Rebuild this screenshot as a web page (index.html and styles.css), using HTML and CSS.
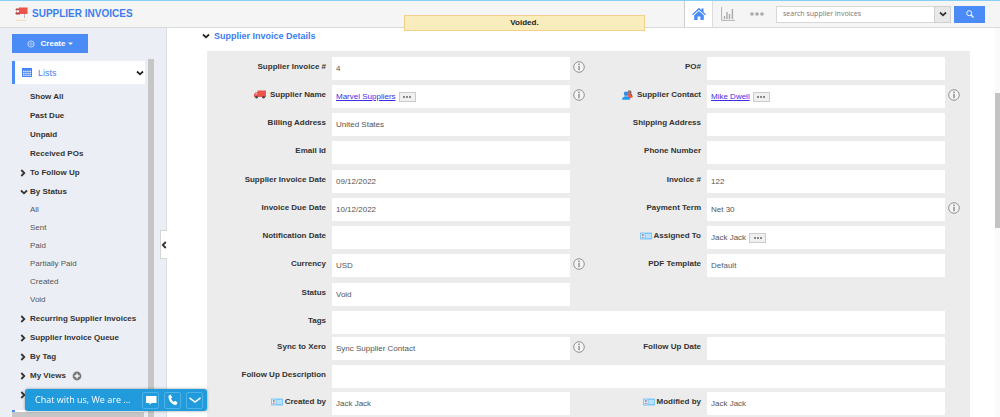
FILE: index.html
```html
<!DOCTYPE html>
<html lang="en">
<head>
<meta charset="utf-8">
<title>Supplier Invoices</title>
<link rel="stylesheet" href="styles.css">
</head>
<body>
<svg class="defs" aria-hidden="true">
  <symbol id="down" viewBox="0 0 8 6"><path d="M1 1.500 4 4.300 7 1.500" fill="none" stroke="currentColor" stroke-width="1.800"/></symbol>
  <symbol id="right" viewBox="0 0 6 8"><path d="M1.300 1 4.300 4 1.300 7" fill="none" stroke="currentColor" stroke-width="1.800"/></symbol>
  <symbol id="info" viewBox="0 0 12 12"><circle cx="6" cy="6" r="5.300" fill="#f4f4f4" stroke="#888" stroke-width=".9"/><path d="M6 2.600v1.300M6 4.800v4.500" stroke="#777" stroke-width="1.200"/></symbol>
  <symbol id="card" viewBox="0 0 12 8"><path d="M0 .5h12v7H0z" fill="#7fc8f8"/><path d="M1 1.600h3.600v4.800H1z" fill="#e4f1fa"/><path d="M5.600 2h5.400v4H5.600z" fill="#b9e2fd"/><circle cx="2.800" cy="3" r=".9" fill="#8f7e80"/><path d="M1.400 6q1.400-3 2.800 0z" fill="#d8898a"/></symbol>
</svg>

<header class="topbar">
  <svg class="logo" viewBox="0 0 14 14"><path d="M1 1.500h4v6H1l-.8-1.500 1.500-1V3.500L.5 3z" fill="#b8453f"/><path d="M1.800 3.200h2.600v2.200H1.800z" fill="#f5f5f5"/><path d="M4 .5h8.500v6.500H5V5.500L4 4.500z" fill="#e9544c"/><path d="M9.500 7v4" stroke="#bbb"/><path d="M1 13.400h10" stroke="#f2d9a0" stroke-width=".8"/></svg>
  <h1 class="title">SUPPLIER INVOICES</h1>
  <nav class="tools">
    <a class="tool active" href="#" aria-label="Home"><svg viewBox="0 0 14 14" width="14" height="14"><path d="M0 7.500 7 .8l2.500 2.400V1.500h2v3.600L14 7.500l-.8.8L7 2.700.8 8.300z" fill="#4285f4"/><path d="M2.200 8.200 7 4l4.800 4.200V13H8.400V9.400H5.600V13H2.200z" fill="#4a8cf5"/></svg></a>
    <a class="tool" href="#" aria-label="Reports"><svg viewBox="0 0 14 14" width="14" height="14"><path d="M.6 0v13.400H14" fill="none" stroke="#aaa" stroke-width=".9"/><path d="M3.500 12V9M6 12V5M8.500 12V7M11.400 12V2" stroke="#aaa" stroke-width="1.400"/></svg></a>
    <a class="tool" href="#" aria-label="More"><svg viewBox="0 0 14 4" width="14" height="4"><g fill="#aaa"><circle cx="2" cy="2" r="1.800"/><circle cx="7" cy="2" r="1.800"/><circle cx="12" cy="2" r="1.800"/></g></svg></a>
  </nav>
  <form class="search">
    <input class="search-input" type="text" placeholder="search supplier invoices" aria-label="Search supplier invoices">
    <button class="search-menu" type="button" aria-label="Search options"><svg width="8" height="6"><use href="#down"/></svg></button>
    <button class="search-go" type="button" aria-label="Search"><svg viewBox="0 0 8 8" width="8" height="8"><circle cx="3.200" cy="3.200" r="2.500" fill="none" stroke="#fff" stroke-width=".9"/><path d="M5 5l2.500 2.500" stroke="#fff" stroke-width="1.200"/></svg></button>
  </form>
  <div class="toast" role="status">Voided.</div>
</header>

<div class="page">
  <aside class="sidebar">
    <button class="create" type="button"><svg viewBox="0 0 8 8" width="8" height="8"><circle cx="4" cy="4" r="3" fill="none" stroke="#b5cff9" stroke-width="1.200"/><path d="M4 2v4M2 4h4" stroke="#9fc0f8" stroke-width=".9"/></svg><span>Create</span><svg viewBox="0 0 5 3" width="5" height="3"><path d="M0 .5h5L2.500 3z" fill="#fff"/></svg></button>
    <div class="lists">
      <svg viewBox="0 0 10 9" width="10" height="9"><path d="M0 0h10v9H0z" fill="#4285f4"/><path d="M1 3.300h8M1 5.300h8M1 7.300h8" stroke="#dfeaff" stroke-width="1.200"/><path d="M2.800 2.500v6M5 2.500v6M7.200 2.500v6" stroke="#4285f4" stroke-width=".6"/></svg>
      <a href="#">Lists</a>
      <svg class="lists-arrow" width="8" height="6"><use href="#down"/></svg>
    </div>
    <nav class="menu">
      <a href="#">Show All</a>
      <a href="#">Past Due</a>
      <a href="#">Unpaid</a>
      <a href="#">Received POs</a>
      <a href="#"><svg class="mark"><use href="#right"/></svg>To Follow Up</a>
      <a href="#"><svg class="mark open"><use href="#down"/></svg>By Status</a>
      <a class="sub" href="#">All</a>
      <a class="sub" href="#">Sent</a>
      <a class="sub" href="#">Paid</a>
      <a class="sub" href="#">Partially Paid</a>
      <a class="sub" href="#">Created</a>
      <a class="sub" href="#">Void</a>
      <a href="#"><svg class="mark"><use href="#right"/></svg>Recurring Supplier Invoices</a>
      <a href="#"><svg class="mark"><use href="#right"/></svg>Supplier Invoice Queue</a>
      <a href="#"><svg class="mark"><use href="#right"/></svg>By Tag</a>
      <a href="#"><svg class="mark"><use href="#right"/></svg>My Views<svg class="add" viewBox="0 0 10 10"><circle cx="5" cy="5" r="4.400" fill="#777"/><path d="M5 2.500v5M2.500 5h5" stroke="#fff" stroke-width="1.300"/></svg></a>
      <a href="#" aria-label="More lists"><svg class="mark"><use href="#right"/></svg></a>
    </nav>
    <div class="next-list"></div>
    <div class="side-scroll"></div>
    <button class="collapse" type="button" aria-label="Collapse sidebar"><svg viewBox="0 0 6 8" width="6" height="8"><path d="M4.800 1 1.800 4l3 3" fill="none" stroke="#333" stroke-width="1.800"/></svg></button>
  </aside>

  <main class="content">
    <h2 class="section"><svg width="8" height="6"><use href="#down"/></svg>Supplier Invoice Details</h2>
    <div class="panel">
      <div class="group">
        <div class="row"><div class="label">Supplier Invoice #</div><div class="value">4</div><svg class="info"><use href="#info"/></svg><div class="label">PO#</div><div class="value"></div></div>
        <div class="row"><div class="label"><svg class="truck" viewBox="0 0 12 9"><path d="M3.500 .5H12v6.500H0V4.200L1.600 2.200h1.900z" fill="#e9544c"/><path d="M1 4.300 2 3h1v1.300z" fill="#f7c2bf"/><circle cx="2.600" cy="7.300" r="1.300" fill="#444"/><circle cx="9.600" cy="7.300" r="1.300" fill="#444"/></svg>Supplier Name</div><div class="value"><a href="#">Marvel Suppliers</a><button class="dots" type="button" aria-label="More"><i></i><i></i><i></i></button></div><svg class="info"><use href="#info"/></svg><div class="label"><svg class="people" viewBox="0 0 11 10"><circle cx="7.500" cy="2.200" r="2" fill="#777"/><path d="M5 4l3-2 3 5-4 2z" fill="#ef5a43"/><circle cx="4" cy="3.800" r="2.200" fill="#2f8fe8"/><path d="M0 9.800Q.3 6.300 4 6.300t4 3.500z" fill="#2196f3"/><path d="M8.500 3.500 10 6" stroke="#666" stroke-width="1.200"/></svg>Supplier Contact</div><div class="value"><a href="#">Mike Dwell</a><button class="dots" type="button" aria-label="More"><i></i><i></i><i></i></button></div><svg class="info"><use href="#info"/></svg></div>
        <div class="row"><div class="label">Billing Address</div><div class="value">United States</div><span></span><div class="label">Shipping Address</div><div class="value"></div></div>
        <div class="row"><div class="label">Email Id</div><div class="value"></div><span></span><div class="label">Phone Number</div><div class="value"></div></div>
      </div>
      <div class="group">
        <div class="row"><div class="label">Supplier Invoice Date</div><div class="value">09/12/2022</div><span></span><div class="label">Invoice #</div><div class="value">122</div></div>
        <div class="row"><div class="label">Invoice Due Date</div><div class="value">10/12/2022</div><span></span><div class="label">Payment Term</div><div class="value">Net 30</div><svg class="info"><use href="#info"/></svg></div>
        <div class="row"><div class="label">Notification Date</div><div class="value"></div><span></span><div class="label"><svg class="card"><use href="#card"/></svg>Assigned To</div><div class="value">Jack Jack<button class="dots" type="button" aria-label="More"><i></i><i></i><i></i></button></div></div>
        <div class="row"><div class="label">Currency</div><div class="value">USD</div><svg class="info"><use href="#info"/></svg><div class="label">PDF Template</div><div class="value default">Default</div></div>
      </div>
      <div class="group">
        <div class="row"><div class="label">Status</div><div class="value">Void</div></div>
        <div class="row"><div class="label">Tags</div><div class="value wide"></div></div>
      </div>
      <div class="group tight">
        <div class="row"><div class="label">Sync to Xero</div><div class="value">Sync Supplier Contact</div><svg class="info"><use href="#info"/></svg><div class="label">Follow Up Date</div><div class="value"></div></div>
        <div class="row"><div class="label">Follow Up Description</div><div class="value wide"></div></div>
      </div>
      <div class="group last">
        <div class="row"><div class="label"><svg class="card"><use href="#card"/></svg>Created by</div><div class="value">Jack Jack</div><span></span><div class="label"><svg class="card"><use href="#card"/></svg>Modified by</div><div class="value">Jack Jack</div></div>
      </div>
    </div>
  </main>
  <div class="page-scroll"><div class="page-thumb"></div></div>
</div>

<div class="chat">
  <span class="chat-text">Chat with us, We are ...</span>
  <button type="button" aria-label="Message"><svg viewBox="0 0 12 12" width="12" height="12"><path d="M1 2h10.500v7H6.500L4.500 11V9H1z" fill="#fff"/></svg></button>
  <button type="button" aria-label="Call"><svg viewBox="0 0 12 12" width="12" height="12"><path d="M2 1.200 3.800.8l1.400 2.700-1.200 1q.8 2.200 2.900 3.400l1.200-1.100 2.400 1.600-.6 1.900q-1.100 1-2.900.5Q2.500 8.700 1.500 3.800 1.300 2 2 1.200z" fill="#fff"/></svg></button>
  <button type="button" aria-label="Minimise"><svg viewBox="0 0 12 12" width="12" height="12"><path d="M.5 3.800 6 8l5.500-4.200" fill="none" stroke="#fff" stroke-width="1.500"/></svg></button>
</div>
</body>
</html>
```

FILE: styles.css
```css
* { box-sizing: border-box; }

body {
  margin: 0;
  height: 100vh;
  overflow: hidden;
  display: flex;
  flex-direction: column;
  background: #fff;
  color: #333;
  font: 8px/10px "Liberation Sans", Arial, sans-serif;
}

a { color: inherit; text-decoration: none; }
button { font: inherit; padding: 0; border: 0; display: flex; align-items: center; justify-content: center; }
svg { flex: none; }
.defs { position: absolute; width: 0; height: 0; }

.topbar {
  position: relative;
  flex: none;
  height: 28px;
  display: flex;
  align-items: center;
  padding: 0 15px;
  background: #f5f5f5;
  border-top: 1px solid #84d0f3;
  border-bottom: 1px solid #d9d9d9;
}
.logo { width: 14px; height: 14px; margin-right: 3px; }
.title { margin: 0; flex: 1; font-size: 10px; line-height: 12px; color: #3b7ded; }
.tools { display: flex; align-self: stretch; margin-right: 5px; }
.tool { width: 29px; display: flex; align-items: center; justify-content: center; }
.tool.active { background: #fff; border-left: 1px solid #ccc; border-right: 1px solid #ddd; }
.search { display: flex; height: 17px; }
.search-input {
  width: 158px;
  padding: 0 6px;
  border: 1px solid #d8d8d8;
  border-right: 0;
  background: #fff;
  font: 7px/10px "Open Sans", sans-serif;
}
.search-input::placeholder { color: #777; opacity: 1; }
.search-menu { width: 17px; background: #e8e8e8; border: 1px solid #d0d0d0; color: #333; }
.search-go { width: 31px; margin-left: 3px; background: #4a8bf8; }
.toast {
  position: absolute;
  top: 14px;
  left: 50%;
  width: 241px;
  margin-left: -96px;
  height: 16px;
  line-height: 14px;
  text-align: center;
  font-weight: bold;
  color: #222;
  background: #f9edbe;
  border: 1px solid #f3d08a;
  z-index: 2;
}

.page { flex: 1; min-height: 0; display: flex; }

.sidebar {
  position: relative;
  flex: none;
  width: 167px;
  padding: 6px 21px 0 12px;
  background: #ebeff5;
  border-right: 1px solid #dcdfe3;
}
.create {
  width: 76px;
  height: 19px;
  gap: 3px;
  background: #4a8bf5;
  color: #fff;
  font-weight: bold;
}
.create span { margin-left: 3px; }
.lists {
  display: flex;
  align-items: center;
  gap: 6px;
  height: 23px;
  margin-top: 8px;
  padding: 0 1px 0 7px;
  background: #fff;
  border-left: 3px solid #4a8bf8;
  font-size: 9px;
  color: #4285f4;
}
.lists-arrow { margin-left: auto; color: #222; }
.menu { padding: 3px 0 0 18px; }
.menu a {
  display: flex;
  align-items: center;
  height: 19px;
  font-weight: bold;
  white-space: nowrap;
}
.menu .sub { height: 18px; font-weight: normal; color: #555; }
.mark { width: 6px; height: 8px; margin-left: -10px; margin-right: 4px; }
.mark.open { width: 8px; height: 6px; margin-right: 2px; }
.add { width: 10px; height: 10px; margin-left: 6px; }
.next-list {
  position: absolute;
  left: 12px;
  right: 22px;
  bottom: 0;
  height: 7px;
  background: linear-gradient(#4a8bf8, #4a8bf8) 0 0 / 3px 2px no-repeat, linear-gradient(#fff, #fff) 0 0 / 100% 2px no-repeat, #c6c6c6;
}
.side-scroll { position: absolute; top: 31px; right: 12px; bottom: 0; width: 6px; background: #c6c6c6; }
.collapse {
  position: absolute;
  top: 202px;
  right: -1px;
  width: 7px;
  height: 29px;
  background: #fff;
  border: 1px solid #d5d5d5;
  border-right: 0;
}

.content {
  flex: 1;
  min-width: 0;
  display: flex;
  flex-direction: column;
  padding: 2px 25px 0 34px;
}
.section {
  display: flex;
  align-items: center;
  gap: 4px;
  margin: 0 0 9px 1px;
  font-size: 9px;
  line-height: 12px;
  color: #3b7ded;
}
.section svg { color: #222; }
.panel { flex: 1; margin-left: 6px; padding-top: 6px; background: #ececec; }
.group { display: grid; gap: 5px; margin-bottom: 6px; }
.group:has(+ .tight) { margin-bottom: 3px; }
.group:has(+ .last) { margin-bottom: 4px; }
.group.last { margin-bottom: 0; }
.row { display: grid; grid-template-columns: 125px 1fr 25px 112px 1fr 25px; height: 23px; }
.label {
  display: flex;
  align-items: center;
  justify-content: flex-end;
  height: 19px;
  padding-right: 6px;
  font-weight: bold;
  white-space: nowrap;
}
.value { display: flex; align-items: center; background: #fff; padding: 0 4px; color: #555; }
.value.wide { grid-column: 2 / 6; }
.value a { color: #3c2ee8; text-decoration: underline; }
.value.default { color: #4a6078; }
.info { width: 12px; height: 12px; margin: 4px 3px; }
.truck { width: 12px; height: 9px; margin-right: 4px; }
.people { width: 11px; height: 10px; margin-right: 4px; }
.card { width: 12px; height: 8px; margin-right: 2px; }
.dots { width: 17px; height: 10px; gap: 1px; margin-left: 3px; background: #f0f0f0; border: 1px solid #ccc; }
.dots i { width: 2px; height: 2px; border-radius: 1px; background: #666; }

.page-scroll { flex: none; width: 5px; padding-top: 65px; background: #fafafa; }
.page-thumb { height: 135px; background: #c3c3c3; }

.chat {
  position: fixed;
  left: 25px;
  bottom: 6px;
  width: 182px;
  height: 22px;
  padding: 0 4px 0 10px;
  display: flex;
  align-items: center;
  gap: 5px;
  border-radius: 3px;
  background: #219bdc;
  box-shadow: 0 0 3px rgba(0, 0, 0, .4);
  color: #fff;
  z-index: 3;
}
.chat-text { flex: 1; font: 9px/12px "Open Sans", sans-serif; white-space: nowrap; }
.chat button { width: 17px; height: 17px; background: #219bdc; border: 1px solid #4bb3e8; border-radius: 2px; }
```
